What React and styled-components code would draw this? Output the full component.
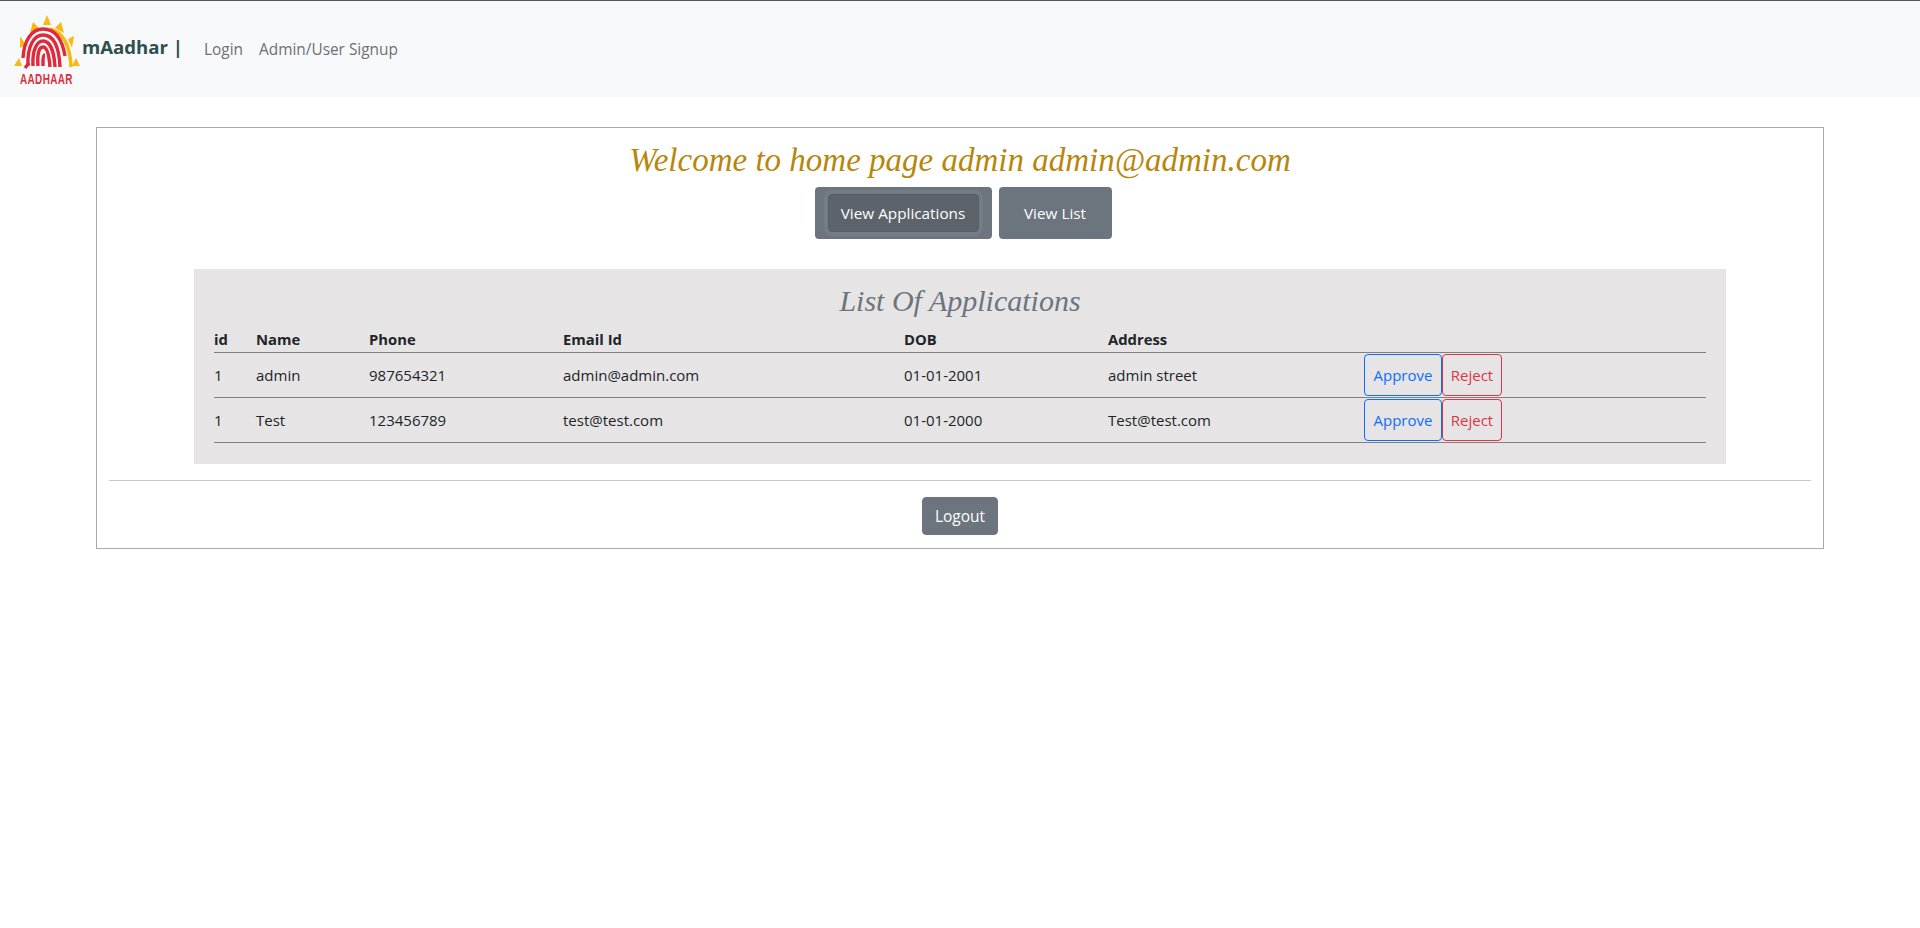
import React from 'react'
import styled, { createGlobalStyle } from 'styled-components'

const GlobalStyle = createGlobalStyle`
    * { box-sizing: border-box; }
    body {
        margin: 0;
        background: #ffffff;
        color: #212529;
        font-family: "Open Sans", "Noto Sans", sans-serif;
        font-size: 15px;
    }
`

const Navbar = styled.nav`
    display: flex;
    align-items: center;
    height: 97px;
    padding: 0 12px;
    background: #f8f9fa;
    border-top: 1px solid #555555;
`

const LogoBox = styled.div`
    position: relative;
    width: 70px;
    height: 72px;
    margin-top: 2px;
`

const LogoWord = styled.span`
    position: absolute;
    left: 8px;
    bottom: 0;
    font-family: "Liberation Sans", sans-serif;
    font-size: 15px;
    font-weight: bold;
    line-height: 14px;
    color: #d9303f;
    transform: scaleX(0.66);
    transform-origin: left center;
    white-space: nowrap;
    letter-spacing: 0.6px;
`

const Brand = styled.span`
    margin: -5px 21px 0 0;
    font-size: 18.6px;
    font-weight: 700;
    color: #2f4f4f;
    white-space: nowrap;
`

const NavLink = styled.a`
    margin-right: 16px;
    margin-top: 1px;
    font-size: 15.4px;
    color: #6c6f78;
`

const Card = styled.main`
    margin: 30px 96px 0;
    padding: 12px 12px 12px;
    border: 1px solid #aaaaaa;
    height: 422px;
`

const Heading = styled.h1`
    margin: 0;
    height: 47px;
    text-align: center;
    font-family: "Liberation Serif", serif;
    font-style: italic;
    font-weight: 400;
    font-size: 33px;
    line-height: 40px;
    color: #b8860b;
`

const ButtonRow = styled.div`
    display: flex;
    justify-content: center;
    gap: 7px;
    padding-left: 6px;
`

const OuterButton = styled.div`
    padding: 7px 13px;
    background: #6c757d;
    border-radius: 4px;
`

const InnerButton = styled.button`
    display: block;
    height: 38px;
    width: ${(p) => p.$width}px;
    padding: 0;
    border: 1px solid ${(p) => (p.$focused ? '#565e64' : '#6c757d')};
    border-radius: 4px;
    background: ${(p) => (p.$focused ? '#5c636a' : '#6c757d')};
    box-shadow: ${(p) => (p.$focused ? '0 0 0 4px #747c84' : 'none')};
    color: #ffffff;
    font: inherit;
    font-size: 15.3px;
`

const Panel = styled.section`
    margin: 30px 85px 0;
    padding: 12px 20px 21px;
    background: #e6e4e5;
`

const PanelTitle = styled.h2`
    margin: 0 0 6px;
    text-align: center;
    font-family: "Liberation Serif", serif;
    font-style: italic;
    font-weight: 400;
    font-size: 30px;
    line-height: 40px;
    color: #6c757d;
`

const Table = styled.table`
    width: 100%;
    border-collapse: collapse;
    table-layout: fixed;
`

const Th = styled.th`
    padding: 0;
    height: 25px;
    text-align: left;
    font-weight: 700;
    font-size: 14.8px;
    color: #212529;
    border-bottom: 1px solid #808080;
`

const Td = styled.td`
    padding: 0;
    height: 45px;
    font-size: 15px;
    color: #212529;
    border-bottom: 1px solid #808080;
`

const Actions = styled.div`
    display: flex;
`

const OutlineButton = styled.button`
    height: 42px;
    width: ${(p) => p.$width}px;
    padding: 0;
    background: transparent;
    border: 1px solid ${(p) => p.$color};
    border-radius: 4px;
    color: ${(p) => p.$color};
    font: inherit;
    font-size: 15px;
`

const Divider = styled.hr`
    margin: 16px 0;
    border: 0;
    border-top: 1px solid #c6c6c6;
`

const LogoutRow = styled.div`
    display: flex;
    justify-content: center;
`

const LogoutButton = styled.button`
    width: 76px;
    height: 38px;
    padding: 0;
    border: 1px solid #6c757d;
    border-radius: 4px;
    background: #6c757d;
    color: #ffffff;
    font: inherit;
    font-size: 15.5px;
`

const rays = [
    [35, 1, 31, 11, 39, 11],
    [21, 8, 18, 19, 27, 14],
    [49, 8, 43, 14, 52, 19],
    [8, 22, 8, 34, 14, 31],
    [62, 22, 56, 25, 60, 34],
    [2, 52, 10, 52, 7, 44],
    [68, 52, 60, 52, 64, 44],
]

const arcs = [
    'M11 44 C12 26 20 15 31 15 C42 15 50 24 53 42',
    'M16 52 C15 32 22 21 31 21 C40 21 47 30 48 53',
    'M21 52 C20 36 25 27 31 27 C37 27 42 35 43 53',
    'M26 52 C25 40 27 33 31 33 C35 33 37 40 38 53',
    'M13 54 L17 49 M31 52 C31 46 31 41 33 41',
]

const Logo = () => (
    <LogoBox>
        <svg width="70" height="58" viewBox="0 0 70 58">
            {rays.map((r, i) => (
                <polygon key={i} points={`${r[0]},${r[1]} ${r[2]},${r[3]} ${r[4]},${r[5]}`} fill="#fbb812" />
            ))}
            <path d="M38 15 C50 18 58 30 59 53" fill="none" stroke="#fbb812" strokeWidth="3.5" />
            {arcs.map((d, i) => (
                <path key={i} d={d} fill="none" stroke="#df2a3c" strokeWidth="3.4" />
            ))}
        </svg>
        <LogoWord>AADHAAR</LogoWord>
    </LogoBox>
)

const columns = [
    ['id', 42],
    ['Name', 113],
    ['Phone', 194],
    ['Email Id', 341],
    ['DOB', 204],
    ['Address', 256],
    ['', 342],
]

const rows = [
    ['1', 'admin', '987654321', 'admin@admin.com', '01-01-2001', 'admin street'],
    ['1', 'Test', '123456789', 'test@test.com', '01-01-2000', 'Test@test.com'],
]

const App = () => {
    return (
        <>
            <GlobalStyle />
            <Navbar>
                <Logo />
                <Brand>mAadhar |</Brand>
                <NavLink>Login</NavLink>
                <NavLink>Admin/User Signup</NavLink>
            </Navbar>
            <Card>
                <Heading>Welcome to home page admin admin@admin.com</Heading>
                <ButtonRow>
                    <OuterButton>
                        <InnerButton $focused $width={151}>View Applications</InnerButton>
                    </OuterButton>
                    <OuterButton>
                        <InnerButton $width={87}>View List</InnerButton>
                    </OuterButton>
                </ButtonRow>
                <Panel>
                    <PanelTitle>List Of Applications</PanelTitle>
                    <Table>
                        <colgroup>
                            {columns.map(([name, width]) => <col key={name} style={{ width }} />)}
                        </colgroup>
                        <thead>
                            <tr>
                                {columns.map(([name]) => <Th key={name}>{name}</Th>)}
                            </tr>
                        </thead>
                        <tbody>
                            {rows.map((row) => (
                                <tr key={row[1]}>
                                    {row.map((cell, i) => <Td key={i}>{cell}</Td>)}
                                    <Td>
                                        <Actions>
                                            <OutlineButton $color="#0d6efd" $width={78}>Approve</OutlineButton>
                                            <OutlineButton $color="#dc3545" $width={60}>Reject</OutlineButton>
                                        </Actions>
                                    </Td>
                                </tr>
                            ))}
                        </tbody>
                    </Table>
                </Panel>
                <Divider />
                <LogoutRow>
                    <LogoutButton>Logout</LogoutButton>
                </LogoutRow>
            </Card>
        </>
    )
}

export default App
